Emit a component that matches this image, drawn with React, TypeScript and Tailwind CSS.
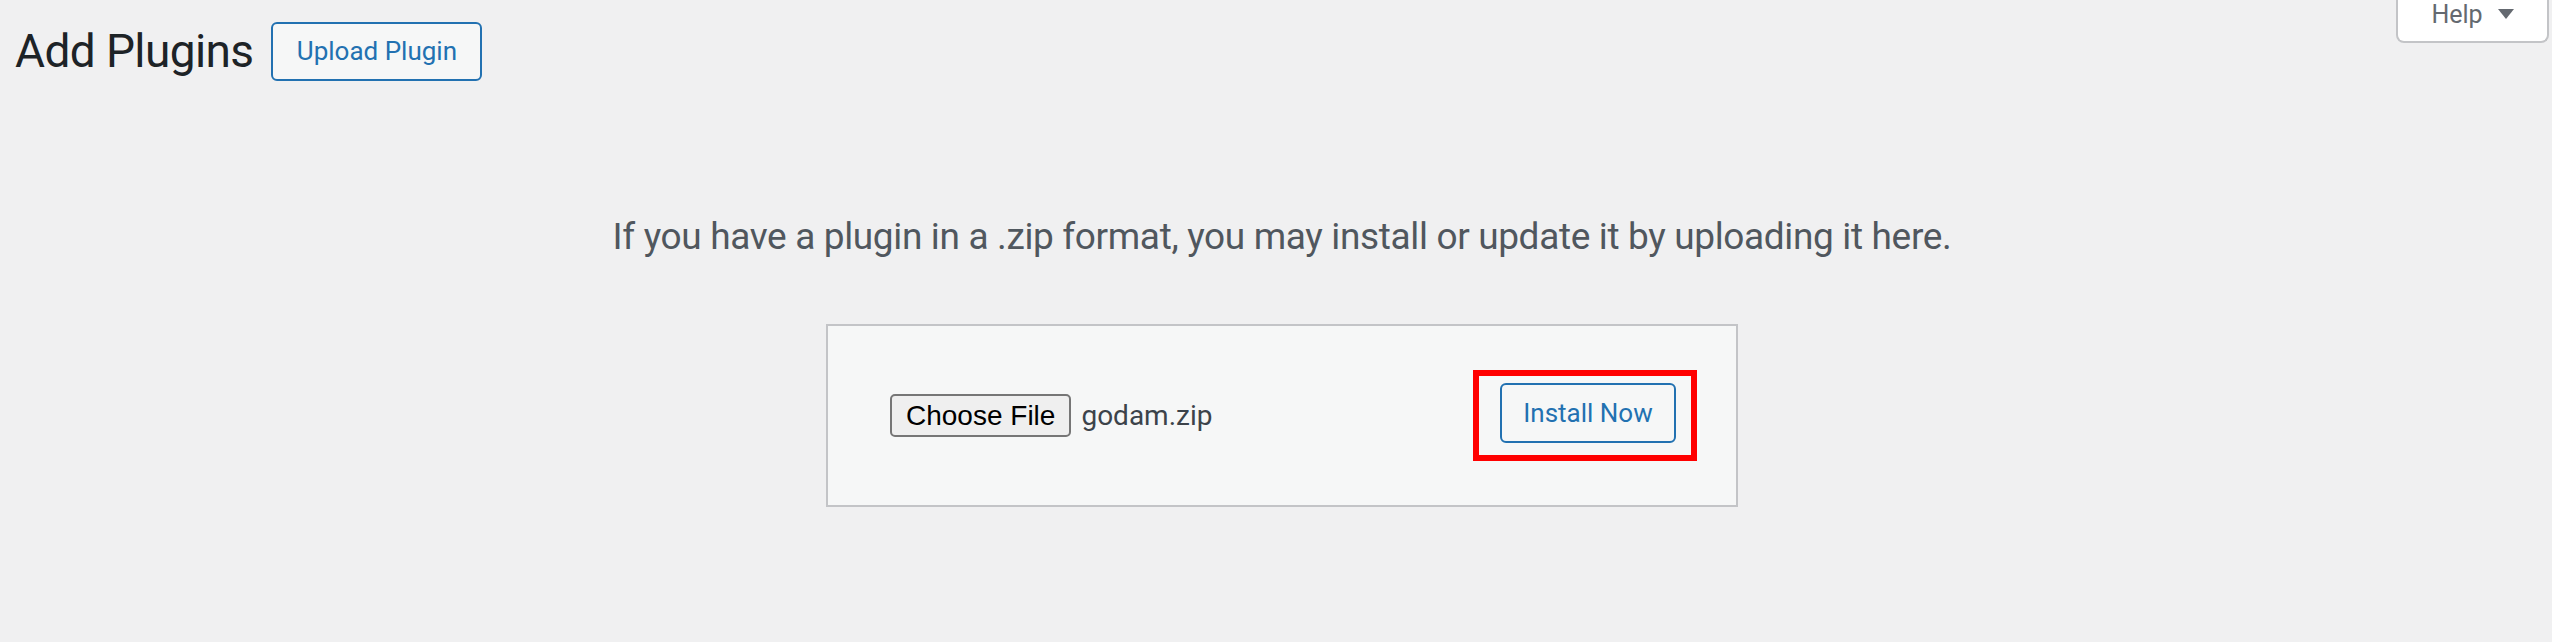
export default function App() {
  return (
    <div className="w-full h-[642px] bg-[#f0f0f1] font-['Roboto',sans-serif] overflow-hidden">
      <div className="flex items-start justify-between">
        <div className="flex items-center pl-[15px] pt-[22px] gap-[18px]">
          <h1 className="text-[46px] leading-[59px] tracking-[-0.6px] text-[#1d2327] font-normal">Add Plugins</h1>
          <button className="h-[59px] w-[211px] border-2 border-[#2271b1] rounded-[6px] bg-[#f6f7f7] text-[#2271b1] text-[26px]">
            Upload Plugin
          </button>
        </div>
        <div className="mr-[3px] w-[153px] h-[43px] bg-white border-2 border-t-0 border-[#c3c4c7] rounded-b-[8px] flex items-center justify-center gap-[15px] pb-[13px]">
          <span className="text-[25px] text-[#646970] leading-none">Help</span>
          <svg width="16" height="10" viewBox="0 0 16 10">
            <path d="M0 0h16L8 10z" fill="#646970" />
          </svg>
        </div>
      </div>

      <div className="pl-[12px] flex flex-col items-center">
        <p className="mt-[134px] text-[37px] leading-[44px] tracking-[-0.35px] text-[#50575e]">
          If you have a plugin in a .zip format, you may install or update it by uploading it here.
        </p>
        <div className="mt-[65px] w-[912px] h-[183px] border-2 border-[#c3c4c7] bg-[#f6f7f7] flex items-center justify-between pl-[62px] pr-[39px]">
          <div className="flex items-center gap-[10px]">
            <button className="h-[43px] px-[14px] bg-[#efefef] border-2 border-[#767676] rounded-[5px] text-black text-[28px] leading-none font-['Liberation_Sans',sans-serif]">
              Choose File
            </button>
            <span className="text-[28px] text-[#3c434a]">godam.zip</span>
          </div>
          <div className="border-[6px] border-[#ff0000] pt-[7px] pl-[21px] pr-[15px] pb-[12px]">
            <button className="h-[60px] w-[176px] border-2 border-[#2271b1] rounded-[6px] bg-[#f6f7f7] text-[#2271b1] text-[26px]">
              Install Now
            </button>
          </div>
        </div>
      </div>
    </div>
  );
}
